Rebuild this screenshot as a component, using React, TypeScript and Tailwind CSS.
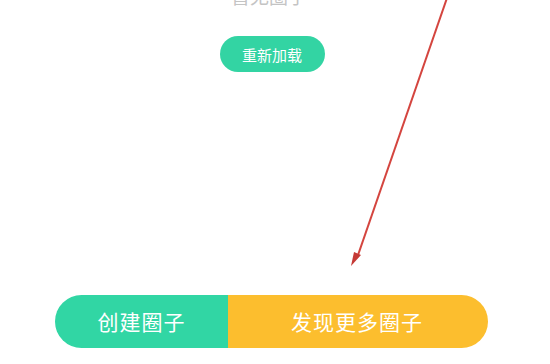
import React from "react";

export default function App() {
  return (
    <div
      className="relative w-[550px] h-[364px] overflow-hidden bg-white"
      style={{ fontFamily: '"Noto Sans CJK SC", "Noto Sans", sans-serif' }}
    >
      <div className="flex flex-col items-center">
        <div className="mt-[-15px] mr-[12px] text-[19px] leading-[22px] text-[#c4c4c4]">暂无圈子</div>
        <button className="mt-[29px] mr-[6px] w-[105px] h-[36px] rounded-full bg-[#33d4a3] text-white text-[15px] leading-none flex items-center justify-center">
          重新加载
        </button>
      </div>
      <div className="absolute left-[55px] top-[295px] w-[433px] h-[53px] rounded-full overflow-hidden flex text-white text-[21px]">
        <div className="w-[173px] bg-[#31d6a4] flex items-center justify-center tracking-[1px]">创建圈子</div>
        <div className="flex-1 bg-[#fcbe2e] flex items-center justify-center pr-[2px] tracking-[1px]">发现更多圈子</div>
      </div>
      <svg className="absolute left-0 top-0" width="550" height="364" viewBox="0 0 550 364">
        <line x1="447" y1="-2" x2="357" y2="258" stroke="#d4453f" strokeWidth="2" />
        <path d="M351 266 L354 252 L361 255 Z" fill="#c53a36" />
      </svg>
    </div>
  );
}
